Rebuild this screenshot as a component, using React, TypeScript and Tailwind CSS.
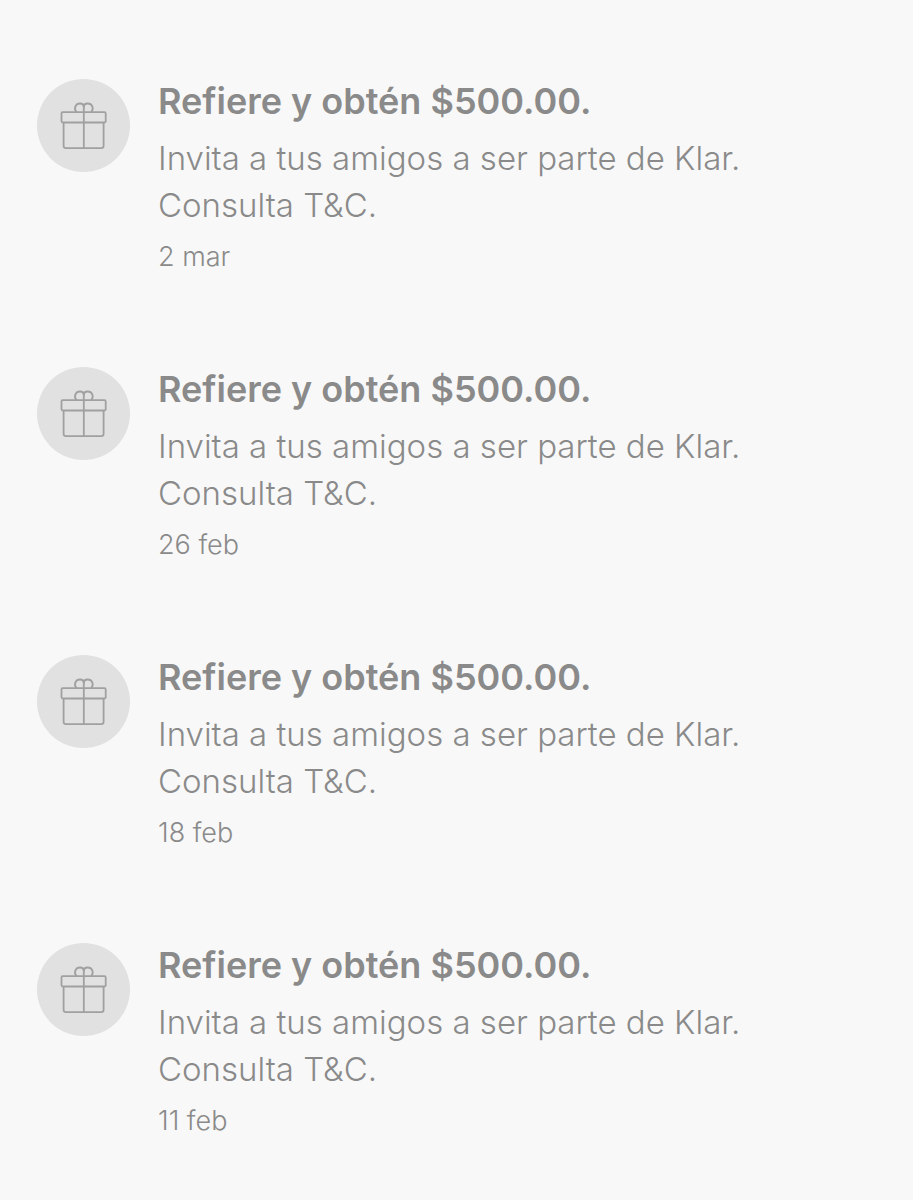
interface Notification {
  id: number
  title: string
  body: string
  date: string
}

const title = 'Refiere y obtén $500.00.'
const body = 'Invita a tus amigos a ser parte de Klar. Consulta T&C.'

const notifications: Notification[] = [
  { id: 4, title, body, date: '2 mar' },
  { id: 3, title, body, date: '26 feb' },
  { id: 2, title, body, date: '18 feb' },
  { id: 1, title, body, date: '11 feb' },
]

function GiftBadge() {
  return (
    <div className="size-[93px] shrink-0 rounded-full bg-[#e1e1e1] text-[#a0a0a0]">
      <svg viewBox="0 0 93 93" fill="none" stroke="currentColor" strokeWidth="1.8" strokeLinejoin="round" aria-hidden="true">
        <rect x="24.5" y="33.2" width="44.2" height="10.3" rx="1.2" />
        <path d="M26.6 43.5V66.7a2.4 2.4 0 0 0 2.4 2.4H64.2a2.4 2.4 0 0 0 2.4-2.4V43.5" />
        <path d="M46.8 26V69" />
        <path d="M39.4 33.2C36.4 29.4 38.6 24.5 43 24.5C45.3 24.5 46.8 26 46.8 28C46.8 26 48.3 24.5 50.6 24.5C55.2 24.5 57.4 29.4 54.2 33.2" />
      </svg>
    </div>
  )
}

function NotificationItem({ item }: { item: Notification }) {
  return (
    <li className="flex items-start gap-7">
      <GiftBadge />
      <div className="min-w-0 max-w-[620px] flex-1 text-[#8a8a8a]">
        <h2 className="text-[36px] leading-[44px] font-semibold">{item.title}</h2>
        <p className="mt-3 text-[33px] leading-[47px] font-light">{item.body}</p>
        <time className="mt-2 block text-[27px] leading-10 font-light">{item.date}</time>
      </div>
    </li>
  )
}

export default function App() {
  return (
    <main className="min-h-screen bg-[#f8f8f8] px-[37px] pt-[79px] pb-12 font-['Inter','Liberation_Sans',sans-serif]">
      <ul className="flex flex-col gap-[90px]">
        {notifications.map((item) => (
          <NotificationItem key={item.id} item={item} />
        ))}
      </ul>
    </main>
  )
}
